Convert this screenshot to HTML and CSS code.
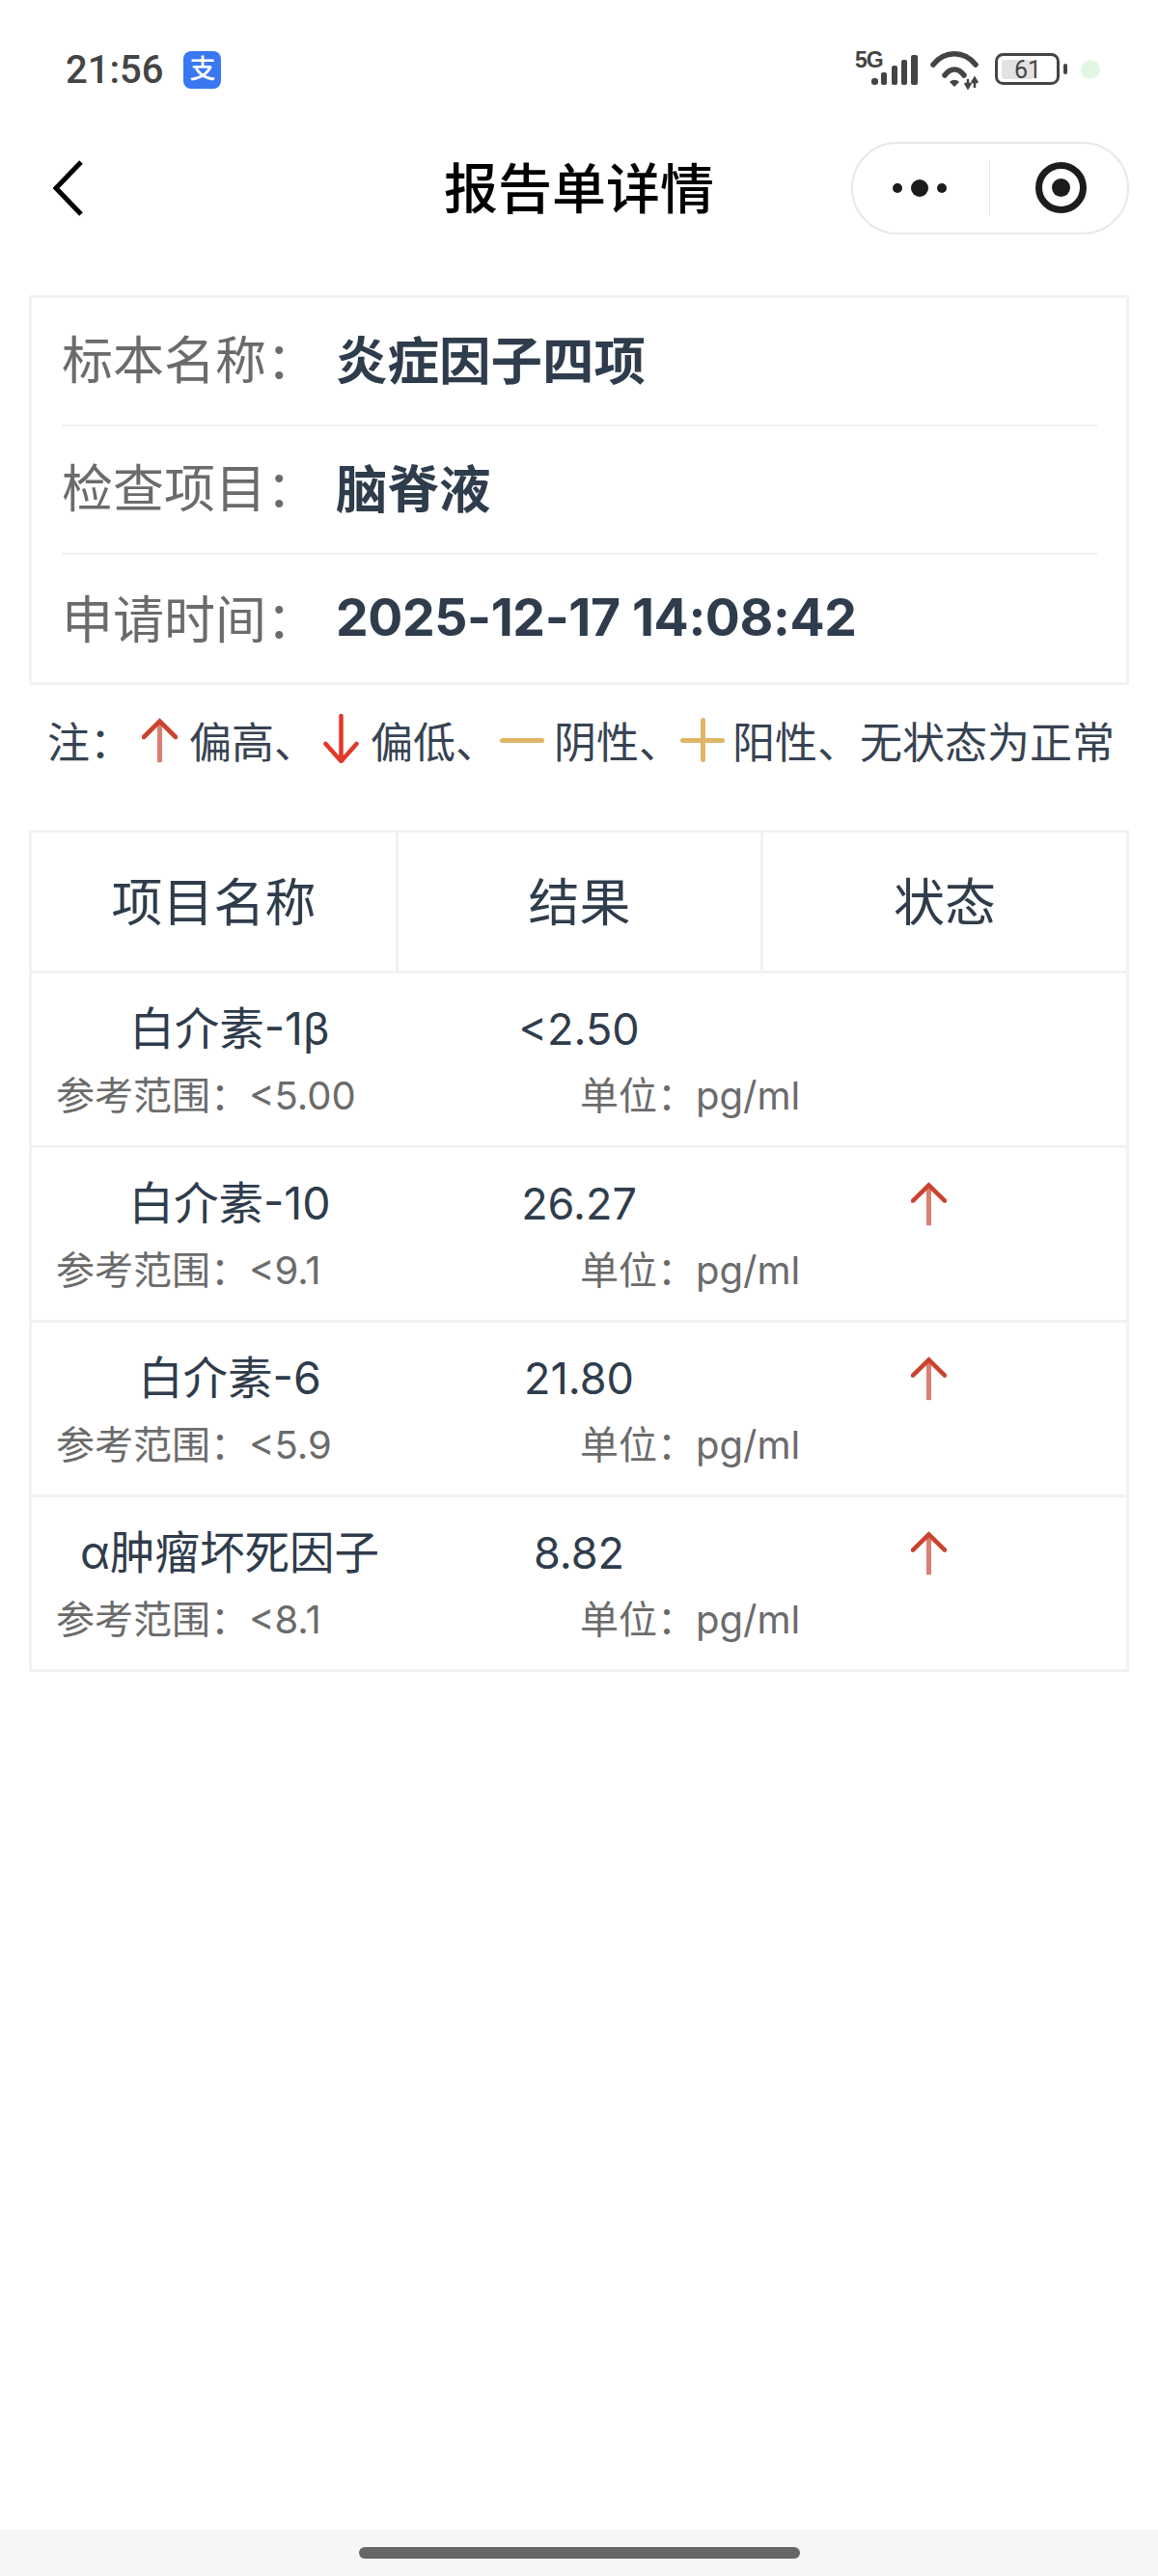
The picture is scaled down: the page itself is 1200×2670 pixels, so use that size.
FILE: index.html
```html
<!DOCTYPE html>
<html lang="zh-CN">
<head>
  <meta charset="UTF-8" />
  <title>报告单详情</title>
  <link rel="stylesheet" href="styles.css">
</head>
<body>

  <div class="status-bar">
    <div class="status-left">
      <span class="clock">21:56</span>
      <span class="alipay">支</span>
    </div>
    <svg class="status-icons" width="256" height="50" viewBox="0 -6 256 50">
      <text class="net-label" x="2" y="17">5G</text>
      <g fill="#444">
        <rect x="19" y="28" width="7" height="7" rx="3"/>
        <rect x="29" y="22" width="6" height="13" rx="2"/>
        <rect x="40" y="15" width="6" height="20" rx="2"/>
        <rect x="50" y="9" width="6" height="26" rx="2"/>
        <rect x="60" y="4" width="7" height="31" rx="2"/>
      </g>
      <g fill="none" stroke="#444" stroke-width="5.5" stroke-linecap="round">
        <path d="M83 14 C95 -1 115 -1 127 14"/>
        <path d="M95 25 C101 17 109 17 115 25"/>
      </g>
      <path d="M100 32 C103 29 107 29 110 32 L105 37 Z" fill="#444"/>
      <path d="M119 29 v9 M116 33 l3 5 l3 -5 M126 38 v-9 M123 33 l3 -5 l3 5" fill="none" stroke="#444" stroke-width="2.5"/>
      <rect x="148.5" y="3.5" width="64" height="30" rx="7" fill="#fff" stroke="#444" stroke-width="3"/>
      <rect x="154" y="9" width="33" height="20" rx="3" fill="#e2e2e2"/>
      <text class="batt-label" x="181" y="28">61</text>
      <rect x="218" y="13" width="4" height="11" rx="2" fill="#444"/>
      <circle cx="246" cy="19" r="10" fill="#e3f5e3"/>
    </svg>
  </div>

  <div class="nav-bar">
    <svg class="back-icon" width="34" height="60" viewBox="0 0 34 60">
      <path d="M29 3 L3 30 L29 57" fill="none" stroke="#000" stroke-width="5"/>
    </svg>
    <div class="nav-title">报告单详情</div>
    <div class="capsule">
      <div class="capsule-part more">
        <span class="dot"></span><span class="dot big"></span><span class="dot"></span>
      </div>
      <div class="capsule-line"></div>
      <div class="capsule-part scan">
        <span class="target"></span>
      </div>
    </div>
  </div>

  <div class="content">
    <div class="info-card">
      <div class="info-row">
        <span class="info-label">标本名称：</span>
        <span class="info-value">炎症因子四项</span>
      </div>
      <div class="info-row">
        <span class="info-label">检查项目：</span>
        <span class="info-value">脑脊液</span>
      </div>
      <div class="info-row">
        <span class="info-label">申请时间：</span>
        <span class="info-value date">2025-12-17 14:08:42</span>
      </div>
    </div>

    <div class="legend">
      <span class="legend-note">注：</span>
      <svg class="legend-icon" width="37" height="47" viewBox="0 0 37 54" preserveAspectRatio="none"><use href="#arrow-up"/></svg>
      <span>偏高、</span>
      <svg class="legend-icon down" width="37" height="51" viewBox="0 0 37 51">
        <path d="M18.5 2 V49 M2.5 31 L18.5 49 L34.5 31" fill="none" stroke="#e0392a" stroke-width="4.5" stroke-linecap="round"/>
      </svg>
      <span>偏低、</span>
      <span class="mark-dash"></span>
      <span>阴性、</span>
      <span class="mark-plus"></span>
      <span>阳性、无状态为正常</span>
    </div>

    <div class="result-table">
      <div class="table-head">
        <div>项目名称</div>
        <div>结果</div>
        <div>状态</div>
      </div>

      <div class="table-row">
        <div class="row-main">
          <span class="row-name">白介素-1β</span>
          <span>&lt;2.50</span>
          <span></span>
        </div>
        <div class="row-sub">
          <span>参考范围：&lt;5.00</span>
          <span>单位：pg/ml</span>
        </div>
      </div>

      <div class="table-row">
        <div class="row-main">
          <span class="row-name">白介素-10</span>
          <span>26.27</span>
          <span class="state"><svg width="37" height="46" viewBox="0 0 37 54" preserveAspectRatio="none"><use href="#arrow-up"/></svg></span>
        </div>
        <div class="row-sub">
          <span>参考范围：&lt;9.1</span>
          <span>单位：pg/ml</span>
        </div>
      </div>

      <div class="table-row">
        <div class="row-main">
          <span class="row-name">白介素-6</span>
          <span>21.80</span>
          <span class="state"><svg width="37" height="46" viewBox="0 0 37 54" preserveAspectRatio="none"><use href="#arrow-up"/></svg></span>
        </div>
        <div class="row-sub">
          <span>参考范围：&lt;5.9</span>
          <span>单位：pg/ml</span>
        </div>
      </div>

      <div class="table-row">
        <div class="row-main">
          <span class="row-name">α肿瘤坏死因子</span>
          <span>8.82</span>
          <span class="state"><svg width="37" height="46" viewBox="0 0 37 54" preserveAspectRatio="none"><use href="#arrow-up"/></svg></span>
        </div>
        <div class="row-sub">
          <span>参考范围：&lt;8.1</span>
          <span>单位：pg/ml</span>
        </div>
      </div>
    </div>
  </div>

  <div class="home-bar"><span class="home-pill"></span></div>

  <svg class="defs" width="0" height="0">
    <symbol id="arrow-up" viewBox="0 0 37 54">
      <path d="M18.5 6 V53" fill="none" stroke="#dc7f72" stroke-width="5"/>
      <path d="M2 23 L18.5 4 L35 23" fill="none" stroke="#c9432f" stroke-width="5" stroke-linecap="round"/>
    </symbol>
  </svg>

</body>
</html>
```

FILE: styles.css
```css
* {
  box-sizing: border-box;
  margin: 0;
  padding: 0;
}

body {
  font-family: Inter, 'Noto Sans CJK SC', sans-serif;
  background-color: #fff;
  color: #2f3c4c;
  min-height: 100vh;
  display: flex;
  flex-direction: column;
}

/* phone status bar */
.status-bar {
  height: 146px;
  padding: 53px 60px 0 68px;
  display: flex;
  justify-content: space-between;
  align-items: flex-start;
}

.status-left {
  display: flex;
  align-items: center;
  gap: 21px;
  height: 39px;
}

.clock {
  font-family: Roboto, sans-serif;
  font-size: 40px;
  line-height: 44px;
  font-weight: 500;
  color: #444;
}

.alipay {
  width: 39px;
  height: 39px;
  border-radius: 8px;
  background-color: #3a78f2;
  color: #fff;
  font-size: 27px;
  line-height: 38px;
  font-weight: 500;
  text-align: center;
}

.status-icons {
  display: block;
  margin-top: -6px;
}

.net-label {
  font-family: 'Liberation Sans', sans-serif;
  font-size: 23px;
  font-weight: 700;
  letter-spacing: -1px;
  fill: #444;
}

.batt-label {
  font-family: Roboto, sans-serif;
  font-size: 25px;
  fill: #444;
  text-anchor: middle;
}

/* title bar */
.nav-bar {
  height: 97px;
  padding: 0 30px 0 55px;
  display: flex;
  align-items: center;
  justify-content: space-between;
  position: relative;
}

.back-icon {
  display: block;
}

.nav-title {
  position: absolute;
  left: 0;
  right: 0;
  padding-bottom: 6px;
  text-align: center;
  font-size: 56px;
  font-weight: 500;
  color: #000;
}

.capsule {
  width: 288px;
  height: 96px;
  border: 2px solid #e8e8e8;
  border-radius: 48px;
  display: flex;
  align-items: center;
  position: relative;
  background-color: #fff;
}

.capsule-part {
  flex: 1;
  display: flex;
  align-items: center;
  justify-content: center;
}

.capsule-part.more {
  gap: 9px;
  padding-right: 3px;
}

.capsule-part.scan {
  padding-left: 4px;
}

.capsule-line {
  width: 1px;
  height: 56px;
  background-color: #e4e4e4;
}

.dot {
  width: 10px;
  height: 10px;
  border-radius: 50%;
  background-color: #1c1c1c;
}

.dot.big {
  width: 18px;
  height: 18px;
}

.target {
  width: 53px;
  height: 53px;
  border-radius: 50%;
  border: 7px solid #1c1c1c;
  display: flex;
  align-items: center;
  justify-content: center;
}

.target::after {
  content: "";
  width: 19px;
  height: 19px;
  border-radius: 50%;
  background-color: #1c1c1c;
}

/* page body */
.content {
  padding: 63px 30px 0;
}

.info-card {
  border: 3px solid #f2f2f2;
  padding: 0 30px 0 31px;
}

.info-row {
  height: 133px;
  padding-bottom: 9px;
  display: flex;
  align-items: center;
  border-bottom: 2px solid #f0f0f0;
}

.info-row:last-child {
  height: 132px;
  padding-bottom: 4px;
  border-bottom: none;
}

.info-label {
  width: 284px;
  font-size: 53px;
  color: #6b6b6b;
}

.info-value {
  font-size: 53.5px;
  font-weight: 700;
  color: #2f3c4c;
}

.info-value.date {
  letter-spacing: -0.4px;
}

.legend {
  height: 150px;
  padding: 0 0 36px 19px;
  display: flex;
  align-items: center;
  font-size: 44px;
  color: #374352;
}

.legend-note {
  width: 98px;
}

.legend-icon {
  display: block;
  margin-right: 12px;
  filter: blur(0.4px);
}

.legend-icon.down {
  margin-left: 7px;
  margin-bottom: 3px;
  filter: none;
}

.mark-dash,
.mark-plus {
  width: 46px;
  height: 46px;
  position: relative;
  display: block;
}

.mark-dash {
  margin-left: 2px;
  margin-right: 10px;
}

.mark-plus {
  margin-left: -1px;
  margin-right: 8px;
}

.mark-dash::before,
.mark-plus::before {
  content: "";
  position: absolute;
  left: 0;
  right: 0;
  top: 21px;
  height: 5px;
  border-radius: 3px;
  background-color: #dfb667;
}

.mark-plus::after {
  content: "";
  position: absolute;
  left: 21px;
  top: 0;
  bottom: 0;
  width: 5px;
  border-radius: 3px;
  background-color: #dfb667;
}

.result-table {
  border: 3px solid #f2f2f2;
}

.table-head {
  display: grid;
  grid-template-columns: 377px 378px 1fr;
  height: 146px;
  border-bottom: 3px solid #f2f2f2;
}

.table-head div {
  padding-bottom: 6px;
  display: flex;
  align-items: center;
  justify-content: center;
  font-size: 53px;
  color: #2f3c4c;
}

.table-head div + div {
  border-left: 3px solid #f2f2f2;
}

.table-row {
  height: 181px;
  padding-top: 20px;
  border-bottom: 3px solid #f2f2f2;
}

.table-row:last-child {
  height: 178px;
  border-bottom: none;
}

.row-main {
  display: grid;
  grid-template-columns: 410px 314px 410px;
  height: 60px;
  align-items: center;
  text-align: center;
  font-size: 45px;
  color: #2f3c4c;
}

.row-name {
  font-size: 46.5px;
  margin-bottom: 8px;
}

.state {
  display: flex;
  justify-content: center;
}

.state svg {
  filter: blur(0.4px);
}

.row-sub {
  display: grid;
  grid-template-columns: 543px 1fr;
  height: 50px;
  margin-top: 22px;
  padding-left: 25px;
  font-size: 40px;
  line-height: 50px;
  color: #6b6b6b;
}

.home-bar {
  margin-top: auto;
  height: 48px;
  background-color: #f6f6f6;
  display: flex;
  justify-content: center;
  padding-top: 18px;
}

.home-pill {
  width: 457px;
  height: 12px;
  border-radius: 6px;
  background-color: #666;
}

.defs {
  position: absolute;
}
```
